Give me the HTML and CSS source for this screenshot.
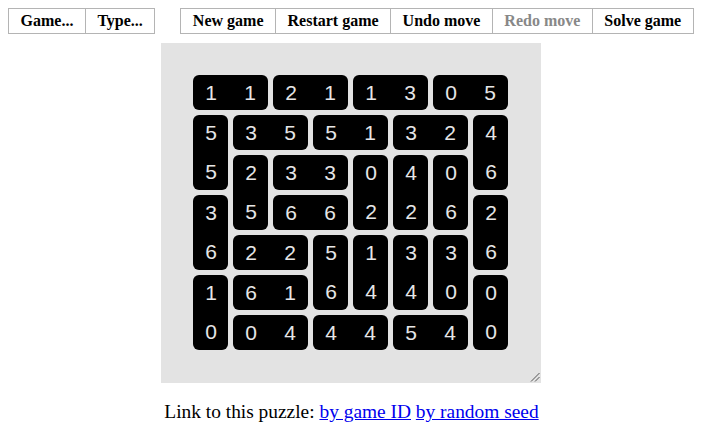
FILE: index.html
```html
<!DOCTYPE html>
<html>
<head>
<meta charset="utf-8">
<title>Dominosa</title>
<link rel="stylesheet" href="styles.css">
</head>
<body>
<div class="toolbar">
  <ul class="menu">
    <li>Game...</li>
    <li>Type...</li>
  </ul>
  <ul class="menu">
    <li>New game</li>
    <li>Restart game</li>
    <li>Undo move</li>
    <li class="disabled">Redo move</li>
    <li>Solve game</li>
  </ul>
</div>
<div class="stage">
  <div class="canvas">
    <div class="board">
      <div class="dom h" style="grid-area:1/1/2/3"><span>1</span><span>1</span></div>
      <div class="dom h" style="grid-area:1/3/2/5"><span>2</span><span>1</span></div>
      <div class="dom h" style="grid-area:1/5/2/7"><span>1</span><span>3</span></div>
      <div class="dom h" style="grid-area:1/7/2/9"><span>0</span><span>5</span></div>
      <div class="dom v" style="grid-area:2/1/4/2"><span>5</span><span>5</span></div>
      <div class="dom v" style="grid-area:4/1/6/2"><span>3</span><span>6</span></div>
      <div class="dom v" style="grid-area:6/1/8/2"><span>1</span><span>0</span></div>
      <div class="dom h" style="grid-area:2/2/3/4"><span>3</span><span>5</span></div>
      <div class="dom h" style="grid-area:2/4/3/6"><span>5</span><span>1</span></div>
      <div class="dom h" style="grid-area:2/6/3/8"><span>3</span><span>2</span></div>
      <div class="dom v" style="grid-area:2/8/4/9"><span>4</span><span>6</span></div>
      <div class="dom v" style="grid-area:3/2/5/3"><span>2</span><span>5</span></div>
      <div class="dom h" style="grid-area:3/3/4/5"><span>3</span><span>3</span></div>
      <div class="dom v" style="grid-area:3/5/5/6"><span>0</span><span>2</span></div>
      <div class="dom v" style="grid-area:3/6/5/7"><span>4</span><span>2</span></div>
      <div class="dom v" style="grid-area:3/7/5/8"><span>0</span><span>6</span></div>
      <div class="dom h" style="grid-area:4/3/5/5"><span>6</span><span>6</span></div>
      <div class="dom v" style="grid-area:4/8/6/9"><span>2</span><span>6</span></div>
      <div class="dom h" style="grid-area:5/2/6/4"><span>2</span><span>2</span></div>
      <div class="dom v" style="grid-area:5/4/7/5"><span>5</span><span>6</span></div>
      <div class="dom v" style="grid-area:5/5/7/6"><span>1</span><span>4</span></div>
      <div class="dom v" style="grid-area:5/6/7/7"><span>3</span><span>4</span></div>
      <div class="dom v" style="grid-area:5/7/7/8"><span>3</span><span>0</span></div>
      <div class="dom h" style="grid-area:6/2/7/4"><span>6</span><span>1</span></div>
      <div class="dom v" style="grid-area:6/8/8/9"><span>0</span><span>0</span></div>
      <div class="dom h" style="grid-area:7/2/8/4"><span>0</span><span>4</span></div>
      <div class="dom h" style="grid-area:7/4/8/6"><span>4</span><span>4</span></div>
      <div class="dom h" style="grid-area:7/6/8/8"><span>5</span><span>4</span></div>
    </div>
    <svg class="resize" width="10" height="10" viewBox="0 0 10 10">
      <line x1="1" y1="9.5" x2="9.5" y2="1" stroke="#555" stroke-width="1"/>
      <line x1="5" y1="9.5" x2="9.5" y2="5" stroke="#555" stroke-width="1"/>
    </svg>
  </div>
</div>
<p class="links">Link to this puzzle: <a href="#">by game ID</a> <a href="#">by random seed</a></p>
</body>
</html>
```
FILE: styles.css
```css
body {
  margin: 8px;
  font-family: "Liberation Serif", "Times New Roman", serif;
  background: #fff;
  color: #000;
}
.toolbar {
  display: flex;
  gap: 25px;
}
.menu {
  display: flex;
  flex-shrink: 0;
  margin: 0;
  padding: 0;
  list-style: none;
}
.menu li {
  border: 1px solid #b4b4b4;
  margin-left: -1px;
  padding: 0 11.5px;
  height: 24px;
  line-height: 24px;
  font-size: 16px;
  font-weight: bold;
  white-space: nowrap;
  flex-shrink: 0;
}
.menu li:first-child {
  margin-left: 0;
}
.menu li.disabled {
  color: #888;
}
.stage {
  display: flex;
  justify-content: center;
  margin-top: 9px;
  margin-left: -8px;
  margin-right: -7px;
}
.canvas {
  position: relative;
  width: 380px;
  height: 340px;
  background: #e3e3e3;
  display: flex;
  align-items: center;
  justify-content: center;
}
.board {
  display: grid;
  grid-template-columns: repeat(8, 40px);
  grid-template-rows: repeat(7, 40px);
}
.dom {
  background: #000;
  border-radius: 6px;
  margin: 2px 3px 3px 2px;
  display: flex;
  justify-content: space-between;
  font-family: "Liberation Sans", Arial, sans-serif;
  font-size: 21px;
  color: #e6e6e6;
}
.dom.v {
  flex-direction: column;
}
.dom span {
  width: 36px;
  height: 36px;
  line-height: 36px;
  text-align: center;
}
.resize {
  position: absolute;
  right: 1px;
  bottom: 1px;
}
.links {
  text-align: center;
  font-size: 19.4px;
  margin: 18px 0 0;
}
.links a {
  color: #0000ee;
}
```
